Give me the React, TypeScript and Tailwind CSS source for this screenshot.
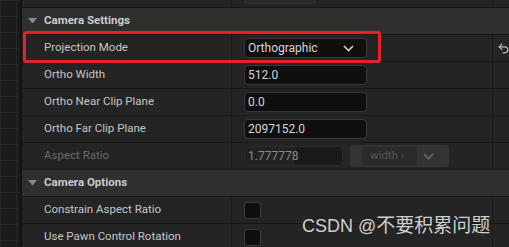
import React from "react";
import { Undo2 } from "lucide-react";

const font = { fontFamily: "Roboto, 'Noto Sans', sans-serif" };

function Chevron({ className = "" }: { className?: string }) {
  return (
    <svg width="11" height="7" viewBox="0 0 11 7" className={className}>
      <path d="M1 1 L5.5 5.5 L10 1" fill="none" stroke="currentColor" strokeWidth="1.6" />
    </svg>
  );
}

function Row({
  label,
  disabled = false,
  children,
  reset = false,
}: {
  label: string;
  disabled?: boolean;
  children?: React.ReactNode;
  reset?: boolean;
}) {
  return (
    <div className="flex h-[27px] shrink-0 border-b border-[#181818] bg-[#242424]">
      <div
        className={`flex w-[209px] items-center pl-[22px] text-[11.5px] ${
          disabled ? "text-[#6a6a6a]" : "text-[#c6c6c6]"
        }`}
      >
        {label}
      </div>
      <div className="w-px bg-[#1a1a1a]" />
      <div className="flex w-[260px] items-center pl-[12px]">{children}</div>
      <div className="w-px bg-[#1a1a1a]" />
      <div className="flex flex-1 items-center overflow-hidden pl-[4px] text-[#bdbdbd]">
        {reset && <Undo2 size={13} strokeWidth={2.2} />}
      </div>
    </div>
  );
}

function Header({ label }: { label: string }) {
  return (
    <div className="flex h-[27px] shrink-0 items-center border-b border-[#181818] bg-[#2f2f2f]">
      <svg width="9" height="6" viewBox="0 0 9 6" className="ml-[6px] mr-[7px]">
        <path d="M0 0 L9 0 L4.5 5.5 Z" fill="#8a8a8a" />
      </svg>
      <span className="text-[11.5px] font-bold text-[#cacaca]">{label}</span>
    </div>
  );
}

function Input({ value }: { value: string }) {
  return (
    <div className="flex h-[20px] w-[123px] items-center rounded-[4px] border border-[#383838] bg-[#0f0f0f] pl-[3px] text-[12px] text-[#d6d6d6]">
      {value}
    </div>
  );
}

function Checkbox() {
  return <div className="h-[17px] w-[17px] rounded-[3px] border border-[#3a3a3a] bg-[#0f0f0f]" />;
}

export default function App() {
  return (
    <div className="relative flex h-[247px] w-[509px] overflow-hidden bg-[#1c1c1c]" style={font}>
      <div className="w-[20px] shrink-0 bg-[#1b1b1b] bg-[linear-gradient(to_right,#262626_1px,transparent_1px),linear-gradient(to_bottom,#262626_1px,transparent_1px)] bg-[size:16px_16px]" />
      <div className="w-[2px] shrink-0 bg-[#121212]" />
      <div className="flex flex-1 flex-col">
        <div className="-mt-[19px] flex flex-col">
          <Row label="">
            <div className="flex items-end gap-[8px]">
              <div className="h-[20px] w-[72px] rounded-[4px] border border-[#363636] bg-[#2a2a2a]" />
              <svg width="14" height="6" viewBox="0 0 14 6" className="mb-[14px]">
                <path d="M1 0 V4 H5 M8 0 V3 M11 0 V2" fill="none" stroke="#9a9a9a" strokeWidth="1" />
              </svg>
            </div>
          </Row>
          <Header label="Camera Settings" />
          <Row label="Projection Mode" reset>
            <div className="flex h-[20px] w-[123px] items-center justify-between rounded-[4px] border border-[#383838] bg-[#0f0f0f] pl-[3px] pr-[12px] text-[12px] text-[#d6d6d6]">
              <span>Orthographic</span>
              <Chevron className="text-[#d0d0d0]" />
            </div>
          </Row>
          <Row label="Ortho Width">
            <Input value="512.0" />
          </Row>
          <Row label="Ortho Near Clip Plane">
            <Input value="0.0" />
          </Row>
          <Row label="Ortho Far Clip Plane">
            <Input value="2097152.0" />
          </Row>
          <Row label="Aspect Ratio" disabled>
            <div className="flex items-center gap-[7px]">
              <div className="relative flex h-[20px] w-[99px] items-center overflow-hidden rounded-[4px] border border-[#2c2c2c] bg-[#1a1a1a] text-[12px] text-[#8a8a8a]">
                <div className="absolute left-0 top-0 h-full w-[50px] bg-[#222222]" />
                <span className="relative pl-[3px]">1.777778</span>
              </div>
              <div className="flex h-[22px] w-[99px] items-center rounded-[4px] bg-[#333333] pl-[12px]">
                <div className="flex h-[18px] w-[55px] items-center rounded-[3px] bg-[#2a2a2a] pl-[8px] text-[11.5px] text-[#585858]">
                  width ›
                </div>
                <Chevron className="ml-[6px] text-[#6a6a6a]" />
              </div>
            </div>
          </Row>
          <Header label="Camera Options" />
          <Row label="Constrain Aspect Ratio">
            <Checkbox />
          </Row>
          <Row label="Use Pawn Control Rotation">
            <Checkbox />
          </Row>
        </div>
      </div>
      <div className="pointer-events-none absolute left-[23px] top-[31px] h-[32px] w-[358px] rounded-[3px] border-[3px] border-[#e5222b]" />
      <div
        className="pointer-events-none absolute left-[302px] top-[210px] flex items-baseline whitespace-nowrap text-[#cfcfcf]"
        style={{ fontFamily: "'Liberation Sans', 'Noto Sans CJK SC', sans-serif" }}
      >
        <span className="text-[18px]">CSDN @</span>
        <span className="text-[19px]" style={{ fontFamily: "'Noto Sans CJK SC', sans-serif" }}>
          不要积累问题
        </span>
      </div>
    </div>
  );
}
